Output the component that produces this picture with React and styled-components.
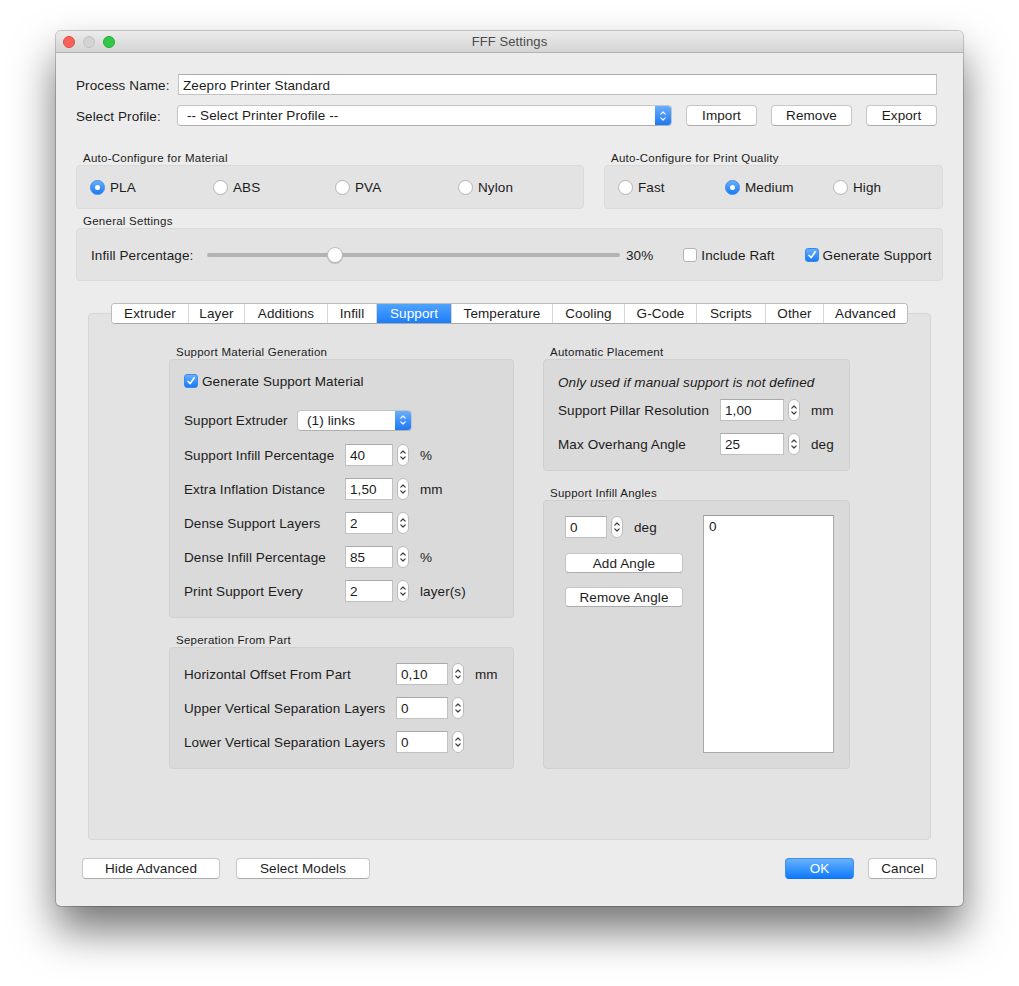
import React from 'react';
import styled, { createGlobalStyle } from 'styled-components';

const GlobalStyle = createGlobalStyle`
  *, *::before, *::after { box-sizing: border-box; }
  html, body { margin: 0; background: #ffffff; }
  body {
    font-family: "Liberation Sans", Arial, sans-serif;
    font-size: 13.5px;
    letter-spacing: 0.1px;
    color: #1c1c1c;
    min-height: 100vh;
  }
  #root { padding: 31px 0 80px 56px; }
`;

const Window = styled.div`
  width: 907px;
  height: 875px;
  background: #ececec;
  border-radius: 5px;
  box-shadow: 0 0 0 1px rgba(0, 0, 0, 0.2), 0 24px 44px rgba(0, 0, 0, 0.55);
  display: flex;
  flex-direction: column;
  overflow: hidden;
`;

const TitleBar = styled.div`
  height: 22px;
  flex: none;
  background: linear-gradient(#ececec, #d4d4d4);
  border-bottom: 1px solid #b4b4b4;
  display: grid;
  grid-template-columns: 1fr auto 1fr;
  align-items: center;
`;

const Lights = styled.div`
  display: flex;
  gap: 8px;
  padding-left: 7px;
`;

const Light = styled.span`
  width: 12px;
  height: 12px;
  border-radius: 50%;
  background: ${p => p.$color};
  border: 1px solid ${p => p.$edge};
`;

const Title = styled.div`
  color: #4b4b4b;
  font-size: 13px;
`;

const Body = styled.div`
  display: flex;
  flex-direction: column;
  padding: 21px 20px 0 20px;
`;

const TopForm = styled.div`
  display: flex;
  flex-direction: column;
  gap: 10px;
  padding-right: 6px;
`;

const FormRow = styled.div`
  display: flex;
  align-items: center;
  height: 21px;
`;

const FormLabel = styled.div`
  width: 101px;
  flex: none;
  padding-top: 1px;
`;

const TextField = styled.div`
  flex: 1;
  height: 21px;
  background: #fff;
  border: 1px solid #c2c2c2;
  border-top-color: #adadad;
  padding: 1px 4px 0;
  display: flex;
  align-items: center;
  margin-left: 1px;
`;

const PopUp = styled.div`
  width: ${p => p.$w}px;
  height: 21px;
  background: #fff;
  border: 1px solid #c4c4c4;
  border-bottom-color: #b0b0b0;
  border-radius: 4px;
  display: flex;
  align-items: center;
  overflow: hidden;
  flex: none;
`;

const PopUpText = styled.div`
  flex: 1;
  padding-left: ${p => p.$pad || 9}px;
`;

const PopUpArrows = styled.div`
  width: 16px;
  height: 100%;
  background: linear-gradient(#6aaefc, #1c78f5);
  display: flex;
  align-items: center;
  justify-content: center;
`;

const Button = styled.div`
  height: ${p => p.$h || 21}px;
  width: ${p => p.$w}px;
  flex: none;
  background: ${p => (p.$primary ? 'linear-gradient(#69b1fb, #0d7bfd)' : '#fff')};
  color: ${p => (p.$primary ? '#fff' : '#1c1c1c')};
  border: 1px solid ${p => (p.$primary ? '#3d8ef5' : '#c6c6c6')};
  border-bottom-color: ${p => (p.$primary ? '#1a6fe0' : '#acacac')};
  border-radius: 4px;
  display: flex;
  align-items: center;
  justify-content: center;
  margin-left: ${p => p.$ml || 0}px;
  margin-top: ${p => p.$mt || 0}px;
`;

const GroupTitle = styled.div`
  font-size: 11.5px;
  letter-spacing: 0.25px;
  line-height: 13px;
  padding-left: 7px;
  margin-top: ${p => p.$mt || 0}px;
  color: #1c1c1c;
  white-space: nowrap;
`;

const GroupBox = styled.div`
  background: ${p => (p.$inner ? '#dadada' : '#e3e3e3')};
  border: 1px solid ${p => (p.$inner ? '#d0d0d0' : '#dadada')};
  border-radius: 4px;
  height: ${p => p.$h}px;
`;

const TwoGroups = styled.div`
  display: flex;
  gap: 20px;
`;

const GroupCol = styled.div`
  width: ${p => p.$w}px;
  display: flex;
  flex-direction: column;
`;

const RadioRow = styled(GroupBox)`
  display: flex;
  align-items: center;
  padding-left: 13px;
`;

const RadioItem = styled.div`
  width: ${p => p.$w}px;
  display: flex;
  align-items: center;
  gap: 5px;
`;

const RadioCircle = styled.span`
  width: 15px;
  height: 15px;
  border-radius: 50%;
  flex: none;
  background: ${p => (p.$on ? 'linear-gradient(#67affc, #1979f4)' : '#fff')};
  border: 1px solid ${p => (p.$on ? '#3a89ee' : '#b3b3b3')};
  display: flex;
  align-items: center;
  justify-content: center;
  &::after {
    content: '';
    width: 5px;
    height: 5px;
    border-radius: 50%;
    background: #fff;
    display: ${p => (p.$on ? 'block' : 'none')};
  }
`;

const CheckSquare = styled.span`
  width: 14px;
  height: 14px;
  border-radius: 3px;
  flex: none;
  background: ${p => (p.$on ? 'linear-gradient(#67affc, #1979f4)' : '#fff')};
  border: 1px solid ${p => (p.$on ? '#3a89ee' : '#b3b3b3')};
  display: flex;
  align-items: center;
  justify-content: center;
`;

const CheckItem = styled.div`
  display: flex;
  align-items: center;
  gap: 4px;
  margin-left: ${p => p.$ml || 0}px;
`;

const GeneralBox = styled(GroupBox)`
  display: flex;
  align-items: center;
  padding: 1px 0 0 14px;
`;

const SliderLabel = styled.div`
  width: 116px;
  flex: none;
`;

const SliderTrack = styled.div`
  width: 413px;
  height: 4px;
  border-radius: 2px;
  background: #b3b3b3;
  position: relative;
  flex: none;
`;

const SliderThumb = styled.span`
  position: absolute;
  top: 50%;
  width: 16px;
  height: 16px;
  margin: -8px 0 0 -8px;
  border-radius: 50%;
  background: #fff;
  border: 1px solid #bdbdbd;
  box-shadow: 0 1px 1px rgba(0, 0, 0, 0.18);
`;

const SliderValue = styled.div`
  margin-left: 6px;
`;

const TabArea = styled.div`
  margin: 22px 12px 0 12px;
  display: flex;
  flex-direction: column;
`;

const TabBar = styled.div`
  align-self: center;
  display: flex;
  height: 21px;
  margin-bottom: -11px;
  position: relative;
  z-index: 1;
  background: #fff;
  border: 1px solid #bcbcbc;
  border-bottom-color: #a9a9a9;
  border-radius: 4px;
  overflow: hidden;
`;

const Tab = styled.div`
  width: ${p => p.$w}px;
  display: flex;
  align-items: center;
  justify-content: center;
  border-left: ${p => (p.$first ? 'none' : '1px solid #d6d6d6')};
  background: ${p => (p.$active ? 'linear-gradient(#4fa3fd, #1b7ef9)' : '#fff')};
  color: ${p => (p.$active ? '#fff' : '#1c1c1c')};
`;

const Pane = styled.div`
  height: 527px;
  background: #e3e3e3;
  border: 1px solid #d6d6d6;
  border-radius: 4px;
  padding: 32px 80px 0 80px;
  display: flex;
  gap: 29px;
`;

const Column = styled.div`
  width: ${p => p.$w}px;
  display: flex;
  flex-direction: column;
`;

const FieldBox = styled(GroupBox)`
  display: flex;
  flex-direction: column;
  padding: ${p => p.$pad};
`;

const Row = styled.div`
  display: flex;
  align-items: center;
  height: 22px;
  margin-top: ${p => p.$mt || 0}px;
`;

const FieldLabel = styled.div`
  width: ${p => p.$w}px;
  flex: none;
  white-space: nowrap;
`;

const SpinField = styled.div`
  width: ${p => p.$w}px;
  height: 22px;
  flex: none;
  background: #fff;
  border: 1px solid #c0c0c0;
  border-top-color: #a9a9a9;
  padding: 0 4px;
  display: flex;
  align-items: center;
`;

const StepperBox = styled.div`
  width: 12px;
  height: 22px;
  margin-left: 4px;
  flex: none;
  background: #fff;
  border: 1px solid #bcbcbc;
  border-radius: 6px;
  display: flex;
  align-items: center;
  justify-content: center;
`;

const Unit = styled.div`
  margin-left: 11px;
`;

const Note = styled.div`
  font-style: italic;
  height: 22px;
  display: flex;
  align-items: center;
`;

const AnglesBox = styled(GroupBox)`
  display: flex;
  padding: 14px 15px 15px 21px;
  gap: 20px;
`;

const AngleControls = styled.div`
  width: 118px;
  display: flex;
  flex-direction: column;
  padding-top: 1px;
`;

const ListBox = styled.div`
  width: 132px;
  height: 238px;
  background: #fff;
  border: 1px solid #a9a9a9;
  border-top-color: #9a9a9a;
  padding: 3px 5px;
`;

const BottomBar = styled.div`
  display: flex;
  align-items: center;
  margin-top: 18px;
  padding: 0 6px;
`;

const Spacer = styled.div`
  flex: 1;
`;

const Chevrons = ({ color = '#3a3a3a', h = 16 }) => (
  <svg width="8" height={h} viewBox="0 0 8 16">
    <path
      d="M1.8 6.2 L4 4 L6.2 6.2 M1.8 9.8 L4 12 L6.2 9.8"
      fill="none"
      stroke={color}
      strokeWidth="1.2"
      strokeLinecap="round"
      strokeLinejoin="round"
    />
  </svg>
);

const CheckMark = () => (
  <svg width="10" height="10" viewBox="0 0 10 10">
    <path d="M2 5.3 L4.2 7.6 L8.2 1.8" fill="none" stroke="#fff" strokeWidth="1.6" strokeLinecap="round" strokeLinejoin="round" />
  </svg>
);

const Check = ({ on, label, ml }) => (
  <CheckItem $ml={ml}>
    <CheckSquare $on={on}>{on && <CheckMark />}</CheckSquare>
    <span>{label}</span>
  </CheckItem>
);

const Radio = ({ on, label, w }) => (
  <RadioItem $w={w}>
    <RadioCircle $on={on} />
    <span>{label}</span>
  </RadioItem>
);

const Spin = ({ label, value, unit, labelW, inputW, mt }) => (
  <Row $mt={mt}>
    {label && <FieldLabel $w={labelW}>{label}</FieldLabel>}
    <SpinField $w={inputW}>{value}</SpinField>
    <StepperBox>
      <Chevrons />
    </StepperBox>
    {unit && <Unit>{unit}</Unit>}
  </Row>
);

const tabs = [
  ['Extruder', 76],
  ['Layer', 56],
  ['Additions', 83],
  ['Infill', 49],
  ['Support', 75],
  ['Temperature', 101],
  ['Cooling', 72],
  ['G-Code', 72],
  ['Scripts', 69],
  ['Other', 58],
  ['Advanced', 84],
];

const supportRows = [
  ['Support Infill Percentage', '40', '%'],
  ['Extra Inflation Distance', '1,50', 'mm'],
  ['Dense Support Layers', '2', ''],
  ['Dense Infill Percentage', '85', '%'],
  ['Print Support Every', '2', 'layer(s)'],
];

const separationRows = [
  ['Horizontal Offset From Part', '0,10', 'mm'],
  ['Upper Vertical Separation Layers', '0', ''],
  ['Lower Vertical Separation Layers', '0', ''],
];

export default function App() {
  const infill = 30;
  return (
    <>
      <GlobalStyle />
      <Window>
        <TitleBar>
          <Lights>
            <Light $color="#fc605b" $edge="#de4b46" />
            <Light $color="#d3d3d3" $edge="#c2c2c2" />
            <Light $color="#33c748" $edge="#27aa35" />
          </Lights>
          <Title>FFF Settings</Title>
          <div />
        </TitleBar>

        <Body>
          <TopForm>
            <FormRow>
              <FormLabel>Process Name:</FormLabel>
              <TextField>Zeepro Printer Standard</TextField>
            </FormRow>
            <FormRow>
              <FormLabel>Select Profile:</FormLabel>
              <PopUp $w={495}>
                <PopUpText>-- Select Printer Profile --</PopUpText>
                <PopUpArrows>
                  <Chevrons color="#fff" />
                </PopUpArrows>
              </PopUp>
              <Button $w={71} $ml={14}>Import</Button>
              <Button $w={81} $ml={14}>Remove</Button>
              <Button $w={71} $ml={14}>Export</Button>
            </FormRow>
          </TopForm>

          <TwoGroups>
            <GroupCol $w={508}>
              <GroupTitle $mt={26}>Auto-Configure for Material</GroupTitle>
              <RadioRow $h={44}>
                <Radio on label="PLA" w={123} />
                <Radio label="ABS" w={122} />
                <Radio label="PVA" w={123} />
                <Radio label="Nylon" w={100} />
              </RadioRow>
            </GroupCol>
            <GroupCol $w={339}>
              <GroupTitle $mt={26}>Auto-Configure for Print Quality</GroupTitle>
              <RadioRow $h={44}>
                <Radio label="Fast" w={107} />
                <Radio on label="Medium" w={108} />
                <Radio label="High" w={90} />
              </RadioRow>
            </GroupCol>
          </TwoGroups>

          <GroupTitle $mt={6}>General Settings</GroupTitle>
          <GeneralBox $h={53}>
            <SliderLabel>Infill Percentage:</SliderLabel>
            <SliderTrack>
              <SliderThumb style={{ left: `${infill * 1.035}%` }} />
            </SliderTrack>
            <SliderValue>{infill}%</SliderValue>
            <Check label="Include Raft" ml={30} />
            <Check on label="Generate Support" ml={30} />
          </GeneralBox>

          <TabArea>
            <TabBar>
              {tabs.map(([name, w], i) => (
                <Tab key={name} $w={w} $first={i === 0} $active={name === 'Support'}>
                  {name}
                </Tab>
              ))}
            </TabBar>
            <Pane>
              <Column $w={345}>
                <GroupTitle>Support Material Generation</GroupTitle>
                <FieldBox $inner $h={259} $pad="10px 14px 0 14px">
                  <Row>
                    <Check on label="Generate Support Material" />
                  </Row>
                  <Row $mt={17}>
                    <FieldLabel $w={113}>Support Extruder</FieldLabel>
                    <PopUp $w={115}>
                      <PopUpText>(1) links</PopUpText>
                      <PopUpArrows>
                        <Chevrons color="#fff" />
                      </PopUpArrows>
                    </PopUp>
                  </Row>
                  {supportRows.map(([label, value, unit], i) => (
                    <Spin
                      key={label}
                      label={label}
                      value={value}
                      unit={unit}
                      labelW={161}
                      inputW={48}
                      mt={i === 0 ? 13 : 12}
                    />
                  ))}
                </FieldBox>

                <GroupTitle $mt={16}>Seperation From Part</GroupTitle>
                <FieldBox $inner $h={122} $pad="15px 14px 0 14px">
                  {separationRows.map(([label, value, unit], i) => (
                    <Spin
                      key={label}
                      label={label}
                      value={value}
                      unit={unit}
                      labelW={212}
                      inputW={52}
                      mt={i === 0 ? 0 : 12}
                    />
                  ))}
                </FieldBox>
              </Column>

              <Column $w={307}>
                <GroupTitle>Automatic Placement</GroupTitle>
                <FieldBox $inner $h={112} $pad="11px 14px 0 14px">
                  <Note>Only used if manual support is not defined</Note>
                  <Spin label="Support Pillar Resolution" value="1,00" unit="mm" labelW={162} inputW={64} mt={6} />
                  <Spin label="Max Overhang Angle" value="25" unit="deg" labelW={162} inputW={64} mt={12} />
                </FieldBox>

                <GroupTitle $mt={16}>Support Infill Angles</GroupTitle>
                <AnglesBox $inner $h={269}>
                  <AngleControls>
                    <Spin value="0" unit="deg" inputW={42} />
                    <Button $w={118} $h={20} $mt={15}>Add Angle</Button>
                    <Button $w={118} $h={20} $mt={14}>Remove Angle</Button>
                  </AngleControls>
                  <ListBox>0</ListBox>
                </AnglesBox>
              </Column>
            </Pane>
          </TabArea>

          <BottomBar>
            <Button $w={138}>Hide Advanced</Button>
            <Button $w={134} $ml={16}>Select Models</Button>
            <Spacer />
            <Button $w={69} $primary>OK</Button>
            <Button $w={69} $ml={14}>Cancel</Button>
          </BottomBar>
        </Body>
      </Window>
    </>
  );
}
